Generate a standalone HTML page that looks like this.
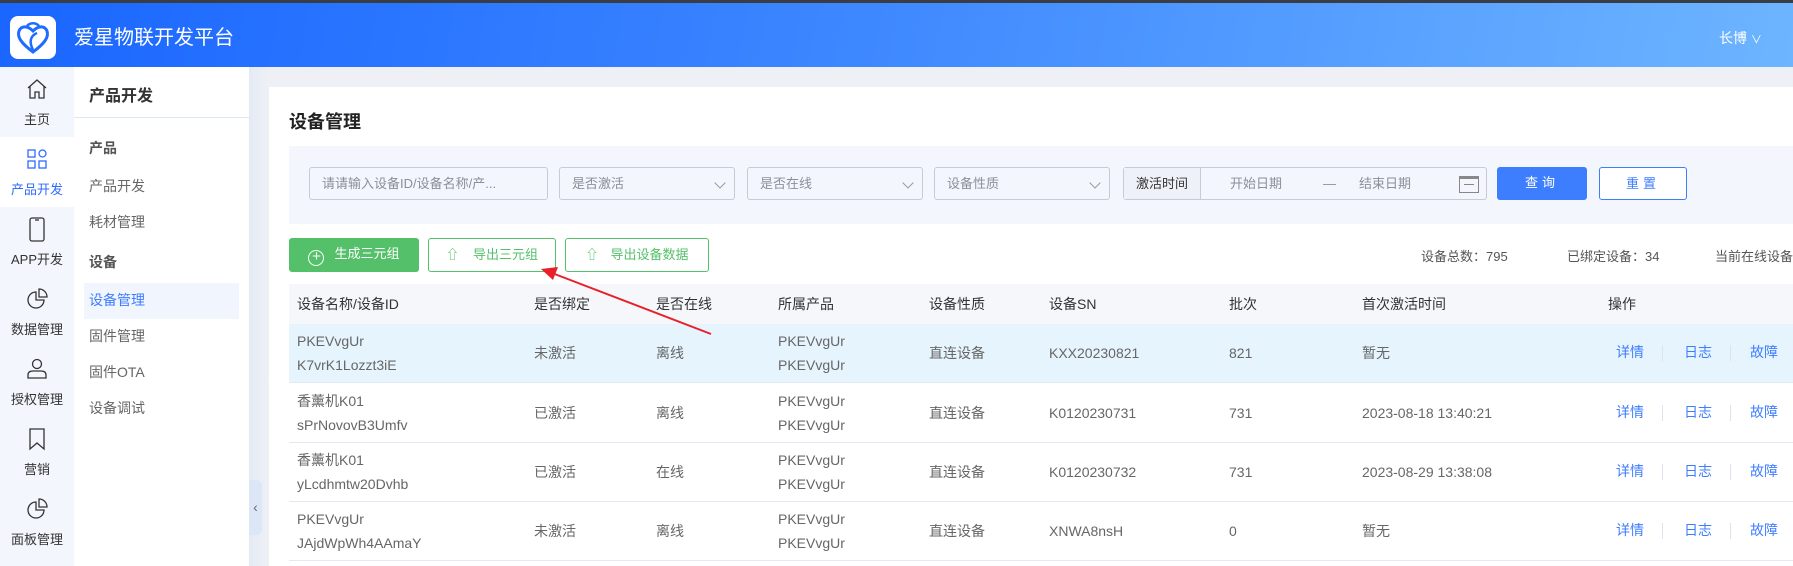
<!DOCTYPE html>
<html><head><meta charset="utf-8"><style>
*{box-sizing:border-box;margin:0;padding:0}
body{width:1793px;height:566px;overflow:hidden;background:#eef0f5;font-family:"Liberation Sans","Noto Sans CJK SC",sans-serif;position:relative;color:#333}
.abs{position:absolute}
.hdr{left:0;top:0;width:1793px;height:67px;background:linear-gradient(100deg,#1a66ff 0%,#3b85ff 45%,#6db5ff 100%)}
.topbar{left:0;top:0;width:1793px;height:3px;background:#3a3d44}
.logo{left:10px;top:15px;width:37px;height:43px}
.nav{left:0;top:67px;width:74px;height:499px;background:#f3f6fd}
.nitem{position:absolute;left:0;width:74px;height:70px;text-align:center;font-size:13px;color:#333}
.nitem svg{position:absolute;left:25px;top:10px}
.nitem span{position:absolute;left:0;width:74px;top:42px}
.side{left:74px;top:67px;width:175px;height:499px;background:#fff}
.si{position:absolute;left:15px;font-size:14px;color:#666;line-height:20px}
.card{left:269px;top:87px;width:1524px;height:479px;background:#fff}
.inp{position:absolute;top:167px;height:33px;border:1px solid #c6cbd6;border-radius:3px;background:#f3f6fc;font-size:13px;color:#8a8f99;line-height:31px;padding-left:12px}
.chev{position:absolute;right:10px;top:11px;width:8px;height:8px;border-right:1px solid #999;border-bottom:1px solid #999;transform:rotate(45deg)}
.btn{position:absolute;top:238px;height:34px;border-radius:3px;font-size:13px;line-height:32px;text-align:center}
.th{position:absolute;font-size:14px;color:#333;top:294px}
.row{position:absolute;left:289px;width:1504px;height:59px;border-bottom:1px solid #e3e9f3}
.c{position:absolute;font-size:14px;color:#666;line-height:24px}
.lk{position:absolute;font-size:14px;color:#3f7dff;top:18px}
.dv{position:absolute;top:21px;width:1px;height:16px;background:#dde3ee}
</style></head><body>
<div class="abs hdr"></div>
<div class="abs topbar"></div>
<div class="abs" style="left:10px;top:16px;width:46px;height:43px;background:#fff;border-radius:8px"></div>
<svg class="abs" style="left:13px;top:18px" width="40" height="40" viewBox="0 0 40 40"><path d="M20 34 C8 25 4 19 6 13 C8 8 14 7 20 13 C26 7 32 8 34 13 C36 19 32 25 20 34Z" fill="none" stroke="#1e6cff" stroke-width="3"/><path d="M14 8 A8 8 0 0 1 26 8" fill="none" stroke="#1e6cff" stroke-width="2.5"/><path d="M20 32 C16 24 17 18 24 15" fill="none" stroke="#1e6cff" stroke-width="2.5"/></svg>
<div class="abs" style="left:74px;top:21px;font-size:20px;color:#fff">爱星物联开发平台</div>
<div class="abs" style="left:1719px;top:28px;font-size:14px;color:#fff">长博 <span style="font-size:11px">∨</span></div>

<div class="abs nav">
 <div class="nitem" style="top:0"><svg width="24" height="24" viewBox="0 0 24 24" fill="none" stroke="#333" stroke-width="1.3"><path d="M3 11 L12 3 L21 11 M5 9 V21 H10 V15 H14 V21 H19 V9"/></svg><span>主页</span></div>
 <div class="nitem" style="top:70px;background:#fff;color:#2f6bff"><svg width="24" height="24" viewBox="0 0 24 24" fill="none" stroke="#2f6bff" stroke-width="1.3"><rect x="3" y="3" width="7" height="7"/><circle cx="17.5" cy="6.5" r="3.5"/><rect x="3" y="14" width="7" height="7"/><rect x="14" y="14" width="7" height="7"/></svg><span>产品开发</span></div>
 <div class="nitem" style="top:140px"><svg width="24" height="26" viewBox="0 0 24 26" fill="none" stroke="#333" stroke-width="1.3"><rect x="5" y="1" width="14" height="23" rx="2"/><path d="M10 3h4"/></svg><span>APP开发</span></div>
 <div class="nitem" style="top:210px"><svg width="24" height="24" viewBox="0 0 24 24" fill="none" stroke="#333" stroke-width="1.3"><path d="M11 5 A8 8 0 1 0 19 13 H11Z"/><path d="M14 2 A8 8 0 0 1 22 10 H14Z"/></svg><span>数据管理</span></div>
 <div class="nitem" style="top:280px"><svg width="24" height="24" viewBox="0 0 24 24" fill="none" stroke="#333" stroke-width="1.3"><circle cx="12" cy="7" r="4.5"/><path d="M3 21 V18 Q3 14 8 14 H16 Q21 14 21 18 V21Z"/></svg><span>授权管理</span></div>
 <div class="nitem" style="top:350px"><svg width="24" height="24" viewBox="0 0 24 24" fill="none" stroke="#333" stroke-width="1.3"><path d="M5 2 H19 V22 L12 16 L5 22Z"/></svg><span>营销</span></div>
 <div class="nitem" style="top:420px"><svg width="24" height="24" viewBox="0 0 24 24" fill="none" stroke="#333" stroke-width="1.3"><path d="M11 5 A8 8 0 1 0 19 13 H11Z"/><path d="M14 2 A8 8 0 0 1 22 10 H14Z"/></svg><span>面板管理</span></div>
</div>

<div class="abs side">
 <div class="si" style="top:20px;font-size:16px;color:#333;font-weight:bold">产品开发</div>
 <div class="abs" style="left:0;top:50px;width:175px;height:1px;background:#dde6f5"></div>
 <div class="si" style="top:71px;color:#555;font-weight:bold">产品</div>
 <div class="si" style="top:109px">产品开发</div>
 <div class="si" style="top:145px">耗材管理</div>
 <div class="si" style="top:185px;color:#555;font-weight:bold">设备</div>
 <div class="abs" style="left:10px;top:216px;width:155px;height:36px;background:#f1f5fd"></div>
 <div class="si" style="top:223px;color:#3f7dff">设备管理</div>
 <div class="si" style="top:259px">固件管理</div>
 <div class="si" style="top:295px">固件OTA</div>
 <div class="si" style="top:331px">设备调试</div>
</div>
<div class="abs" style="left:249px;top:67px;width:20px;height:499px;background:linear-gradient(90deg,#e4eaf5,#eef0f5)"></div>
<div class="abs" style="left:249px;top:480px;width:13px;height:55px;background:#dce6f7;border-radius:0 6px 6px 0;color:#667;font-size:14px;line-height:55px;text-align:center">‹</div>

<div class="abs card"></div>
<div class="abs" style="left:289px;top:108px;font-size:18px;font-weight:bold;color:#222">设备管理</div>
<div class="abs" style="left:289px;top:146px;width:1504px;height:78px;background:#f3f6fc"></div>
<div class="inp" style="left:309px;width:239px">请请输入设备ID/设备名称/产...</div>
<div class="inp" style="left:559px;width:176px">是否激活<i class="chev"></i></div>
<div class="inp" style="left:747px;width:176px">是否在线<i class="chev"></i></div>
<div class="inp" style="left:934px;width:176px">设备性质<i class="chev"></i></div>
<div class="inp" style="left:1123px;width:364px;padding:0">
 <div class="abs" style="left:0;top:0;width:77px;height:31px;background:#eef1f7;border-right:1px solid #c6cbd6;color:#333;text-align:center">激活时间</div>
 <div class="abs" style="left:106px;top:0">开始日期</div>
 <div class="abs" style="left:199px;top:0">—</div>
 <div class="abs" style="left:235px;top:0">结束日期</div>
 <div class="abs" style="left:335px;top:8px;width:20px;height:17px;border:1px solid #888;border-top-width:3px"><div class="abs" style="left:4px;top:5px;width:10px;height:1px;background:#888"></div></div>
</div>
<div class="btn" style="left:1497px;top:167px;width:90px;height:33px;background:#3d7eff;color:#fff;letter-spacing:4px">查询</div>
<div class="btn" style="left:1599px;top:167px;width:88px;height:33px;border:1px solid #3d7eff;color:#3d7eff;background:#fff;letter-spacing:4px">重置</div>

<div class="btn" style="left:289px;width:130px;background:#55c06a;color:#fff"><span style="display:inline-block;width:16px;height:16px;border:1.3px solid #fff;border-radius:50%;vertical-align:-3px;margin-right:10px;line-height:12px;font-size:15px">+</span>生成三元组</div>
<div class="btn" style="left:428px;width:128px;border:1px solid #55c06a;color:#55c06a;background:#fff"><span style="margin-right:14px">⇧</span>导出三元组</div>
<div class="btn" style="left:565px;width:144px;border:1px solid #55c06a;color:#55c06a;background:#fff"><span style="margin-right:12px">⇧</span>导出设备数据</div>
<div class="abs" style="left:1421px;top:246px;font-size:13px;color:#555">设备总数：795</div>
<div class="abs" style="left:1567px;top:246px;font-size:13px;color:#555">已绑定设备：34</div>
<div class="abs" style="left:1715px;top:246px;font-size:13px;color:#555;white-space:nowrap">当前在线设备</div>

<div class="abs" style="left:289px;top:284px;width:1504px;height:40px;background:#f5f7fa"></div>
<div class="th" style="left:297px">设备名称/设备ID</div>
<div class="th" style="left:534px">是否绑定</div>
<div class="th" style="left:656px">是否在线</div>
<div class="th" style="left:778px">所属产品</div>
<div class="th" style="left:929px">设备性质</div>
<div class="th" style="left:1049px">设备SN</div>
<div class="th" style="left:1229px">批次</div>
<div class="th" style="left:1362px">首次激活时间</div>
<div class="th" style="left:1608px">操作</div>

<div class="row" style="top:324px;background:#e6f4fe">
 <div class="c" style="left:8px;top:5px">PKEVvgUr<br>K7vrK1Lozzt3iE</div><div class="c" style="left:245px;top:17px">未激活</div><div class="c" style="left:367px;top:17px">离线</div><div class="c" style="left:489px;top:5px">PKEVvgUr<br>PKEVvgUr</div><div class="c" style="left:640px;top:17px">直连设备</div><div class="c" style="left:760px;top:17px">KXX20230821</div><div class="c" style="left:940px;top:17px">821</div><div class="c" style="left:1073px;top:17px">暂无</div>
 <div class="lk" style="left:1327px">详情</div><div class="dv" style="left:1373px"></div><div class="lk" style="left:1395px">日志</div><div class="dv" style="left:1441px"></div><div class="lk" style="left:1461px">故障</div></div>
<div class="row" style="top:384px">
 <div class="c" style="left:8px;top:5px">香薰机K01<br>sPrNovovB3Umfv</div><div class="c" style="left:245px;top:17px">已激活</div><div class="c" style="left:367px;top:17px">离线</div><div class="c" style="left:489px;top:5px">PKEVvgUr<br>PKEVvgUr</div><div class="c" style="left:640px;top:17px">直连设备</div><div class="c" style="left:760px;top:17px">K0120230731</div><div class="c" style="left:940px;top:17px">731</div><div class="c" style="left:1073px;top:17px">2023-08-18 13:40:21</div>
 <div class="lk" style="left:1327px">详情</div><div class="dv" style="left:1373px"></div><div class="lk" style="left:1395px">日志</div><div class="dv" style="left:1441px"></div><div class="lk" style="left:1461px">故障</div></div>
<div class="row" style="top:443px">
 <div class="c" style="left:8px;top:5px">香薰机K01<br>yLcdhmtw20Dvhb</div><div class="c" style="left:245px;top:17px">已激活</div><div class="c" style="left:367px;top:17px">在线</div><div class="c" style="left:489px;top:5px">PKEVvgUr<br>PKEVvgUr</div><div class="c" style="left:640px;top:17px">直连设备</div><div class="c" style="left:760px;top:17px">K0120230732</div><div class="c" style="left:940px;top:17px">731</div><div class="c" style="left:1073px;top:17px">2023-08-29 13:38:08</div>
 <div class="lk" style="left:1327px">详情</div><div class="dv" style="left:1373px"></div><div class="lk" style="left:1395px">日志</div><div class="dv" style="left:1441px"></div><div class="lk" style="left:1461px">故障</div></div>
<div class="row" style="top:502px">
 <div class="c" style="left:8px;top:5px">PKEVvgUr<br>JAjdWpWh4AAmaY</div><div class="c" style="left:245px;top:17px">未激活</div><div class="c" style="left:367px;top:17px">离线</div><div class="c" style="left:489px;top:5px">PKEVvgUr<br>PKEVvgUr</div><div class="c" style="left:640px;top:17px">直连设备</div><div class="c" style="left:760px;top:17px">XNWA8nsH</div><div class="c" style="left:940px;top:17px">0</div><div class="c" style="left:1073px;top:17px">暂无</div>
 <div class="lk" style="left:1327px">详情</div><div class="dv" style="left:1373px"></div><div class="lk" style="left:1395px">日志</div><div class="dv" style="left:1441px"></div><div class="lk" style="left:1461px">故障</div></div>

<svg class="abs" style="left:0;top:0" width="1793" height="566"><line x1="711" y1="334" x2="552" y2="273" stroke="#e8202a" stroke-width="2"/><polygon points="541,269 558,267 553,280" fill="#e8202a"/></svg>
</body></html>
